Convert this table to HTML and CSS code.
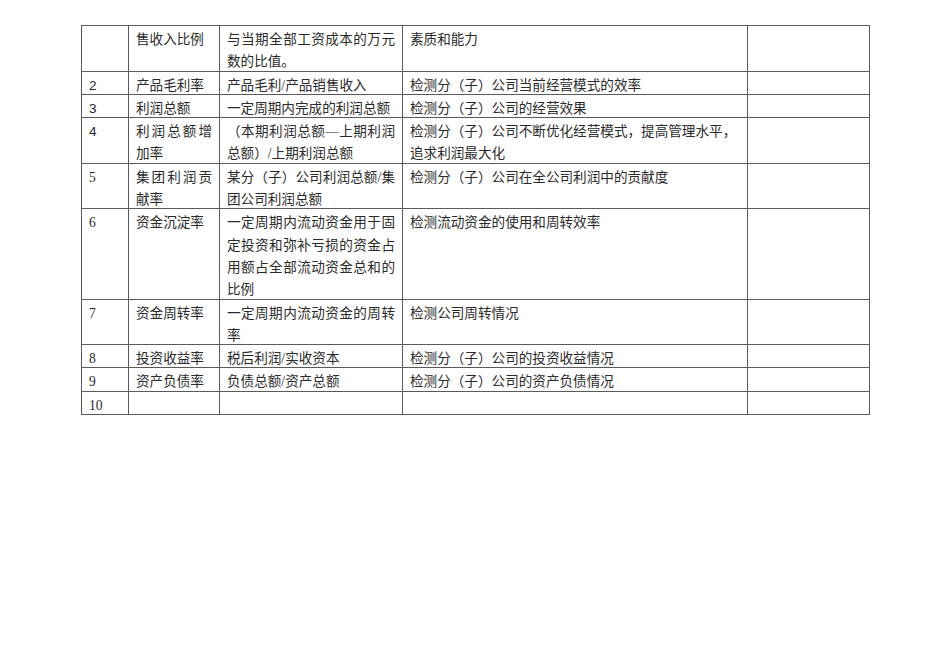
FILE: index.html
```html
<!DOCTYPE html>
<html lang="zh-CN">
<head>
<meta charset="utf-8">
<title>指标表</title>
<link rel="stylesheet" href="styles.css">
</head>
<body>
<table class="kpi">
  <colgroup>
    <col class="c-no">
    <col class="c-name">
    <col class="c-formula">
    <col class="c-purpose">
    <col class="c-note">
  </colgroup>
  <tbody>
    <tr><td></td><td class="j"><span>售收入比例</span></td><td class="j"><span>与当期全部工资成本的万元数的比值。</span></td><td><span>素质和能力</span></td><td></td></tr>
    <tr><td class="sans"><span>2</span></td><td class="j"><span>产品毛利率</span></td><td><span>产品毛利/产品销售收入</span></td><td><span>检测分（子）公司当前经营模式的效率</span></td><td></td></tr>
    <tr><td class="sans"><span>3</span></td><td class="j"><span>利润总额</span></td><td><span>一定周期内完成的利润总额</span></td><td><span>检测分（子）公司的经营效果</span></td><td></td></tr>
    <tr><td class="sans"><span>4</span></td><td class="j"><span>利润总额增加率</span></td><td class="j"><span>（本期利润总额—上期利润总额）/上期利润总额</span></td><td><span>检测分（子）公司不断优化经营模式，提高管理水平，追求利润最大化</span></td><td></td></tr>
    <tr><td><span>5</span></td><td class="j"><span>集团利润贡献率</span></td><td class="j"><span>某分（子）公司利润总额/集团公司利润总额</span></td><td><span>检测分（子）公司在全公司利润中的贡献度</span></td><td></td></tr>
    <tr><td><span>6</span></td><td class="j"><span>资金沉淀率</span></td><td class="j"><span>一定周期内流动资金用于固定投资和弥补亏损的资金占用额占全部流动资金总和的比例</span></td><td><span>检测流动资金的使用和周转效率</span></td><td></td></tr>
    <tr><td><span>7</span></td><td class="j"><span>资金周转率</span></td><td class="j"><span>一定周期内流动资金的周转率</span></td><td><span>检测公司周转情况</span></td><td></td></tr>
    <tr><td><span>8</span></td><td class="j"><span>投资收益率</span></td><td><span>税后利润/实收资本</span></td><td><span>检测分（子）公司的投资收益情况</span></td><td></td></tr>
    <tr><td><span>9</span></td><td class="j"><span>资产负债率</span></td><td><span>负债总额/资产总额</span></td><td><span>检测分（子）公司的资产负债情况</span></td><td></td></tr>
    <tr><td><span>10</span></td><td></td><td></td><td></td><td></td></tr>
  </tbody>
</table>
</body>
</html>
```

FILE: styles.css
```css
html, body {
  margin: 0;
  padding: 0;
  background: #ffffff;
}

body {
  font-family: "Liberation Serif", "Noto Sans CJK SC", serif;
  font-size: 13.6px;
  color: #2a2a2a;
}

.kpi {
  border-collapse: collapse;
  table-layout: fixed;
  width: 788px;
  margin: 25px 0 0 81px;
}

.c-no { width: 47px; }
.c-name { width: 91px; }
.c-formula { width: 183px; }
.c-purpose { width: 345px; }
.c-note { width: 122px; }

.kpi td {
  border: 1px solid #5a5a5a;
  vertical-align: top;
  padding: 0 7px;
  line-height: 22.3px;
  height: 22.3px;
  text-align: left;
  overflow: hidden;
}

.kpi td > span {
  line-height: 15px;
  vertical-align: -3px;
}

.kpi td.j {
  text-align: justify;
}

.kpi td.sans {
  font-family: "Liberation Sans", "Noto Sans CJK SC", sans-serif;
}
```
